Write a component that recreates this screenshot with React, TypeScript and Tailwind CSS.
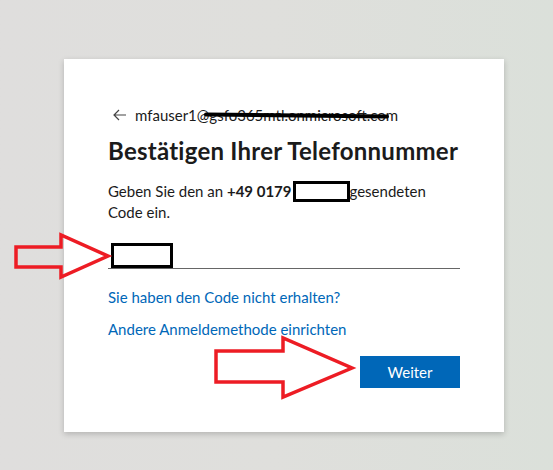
import React from "react";

export default function App() {
  return (
    <div
      className="relative w-[553px] h-[470px] overflow-hidden bg-gradient-to-r from-[#dfdedd] via-[#dfdfdc] to-[#dbe0da]"
      style={{ fontFamily: 'Lato, "Noto Sans", sans-serif' }}
    >
      <div className="pt-[59px] pl-[64px]">
        <div className="w-[440px] h-[373px] bg-white shadow-[0_2px_6px_rgba(0,0,0,0.2)] pt-[46px] px-[44px] text-[#1b1b1b]">
          <div className="relative flex items-center h-[20px] text-[15px] leading-[20px]">
            <svg width="14" height="14" viewBox="0 0 14 14" className="mr-[8px] ml-[5px]">
              <path d="M6 2 L1 7 L6 12 M1 7 H13" fill="none" stroke="#444" strokeWidth="1.2" />
            </svg>
            <span className="whitespace-nowrap">mfauser1@gsfo365mtl.onmicrosoft.com</span>
            <svg className="absolute left-0 top-0" width="300" height="20" viewBox="0 0 300 20">
              <line x1="98" y1="9.5" x2="279" y2="11.5" stroke="#000" strokeWidth="4" strokeLinecap="round" />
            </svg>
          </div>
          <h1 className="mt-[12px] h-[28px] text-[24px] leading-[28px] font-bold tracking-[0.25px] whitespace-nowrap">
            Bestätigen Ihrer Telefonnummer
          </h1>
          <p className="mt-[16px] text-[15px] leading-[20px]">
            Geben Sie den an <span className="font-bold">+49 0179</span>
            <span className="inline-block w-[57px] h-[21px] border-[3px] border-black align-[-5px] ml-[1px]"></span>
            gesendeten
            <br />
            Code ein.
          </p>
          <div className="mt-[10px] h-[37px] border-b border-[#666] flex items-end pl-[3px]">
            <div className="w-[62px] h-[25px] border-[3px] border-black bg-white"></div>
          </div>
          <div className="mt-[18px] text-[15px] leading-[20px] text-[#0067b8]">
            Sie haben den Code nicht erhalten?
          </div>
          <div className="mt-[12px] text-[15px] leading-[20px] text-[#0067b8]">
            Andere Anmeldemethode einrichten
          </div>
          <div className="mt-[17px] flex justify-end">
            <button className="w-[100px] h-[32px] bg-[#0067b8] text-white text-[15px] leading-[20px]">
              Weiter
            </button>
          </div>
        </div>
      </div>
      <svg className="absolute left-0 top-0 pointer-events-none" width="553" height="470" viewBox="0 0 553 470">
        <polygon
          points="16,247 61,247 61,235 108,256 61,277 61,267 16,267"
          fill="none"
          stroke="#ed1c24"
          strokeWidth="3.5"
          strokeLinejoin="miter"
        />
        <polygon
          points="216,351 283,351 283,338 352,368 283,397 283,382 216,382"
          fill="none"
          stroke="#ed1c24"
          strokeWidth="3.5"
          strokeLinejoin="miter"
        />
      </svg>
    </div>
  );
}
